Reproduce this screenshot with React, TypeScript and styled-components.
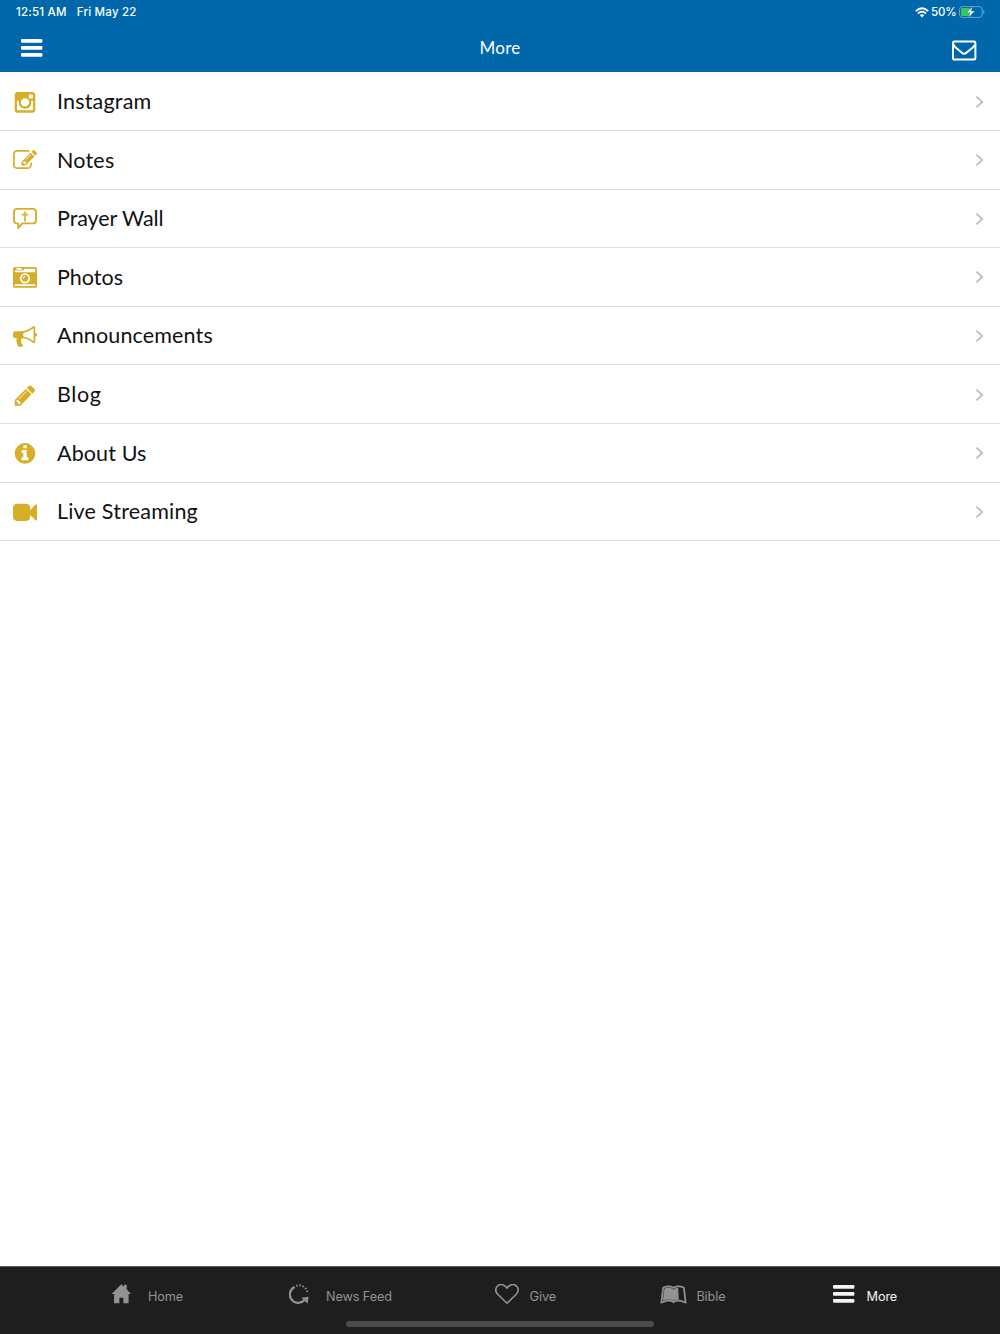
import React from "react";
import styled, { createGlobalStyle } from "styled-components";
import { FaLeanpub } from "react-icons/fa";

const GlobalStyle = createGlobalStyle`
  * { box-sizing: border-box; }
  body { margin: 0; background: #fff; }
`;

const Screen = styled.div`
  display: flex;
  flex-direction: column;
  height: 1334px;
  overflow: hidden;
  background: #fff;
  font-family: Lato, "Open Sans", sans-serif;
`;

const Header = styled.header`
  height: 72.4px;
  background: #0067ab;
  color: #fff;
  flex: none;
`;

const StatusBar = styled.div`
  height: 24px;
  display: flex;
  align-items: center;
  justify-content: space-between;
  padding: 0 15px 0 16px;
  font: 500 11.5px/24px Inter, sans-serif;
`;

const StatusGroup = styled.div<{ $gap: number; $spacing: number }>`
  display: flex;
  align-items: center;
  gap: ${(p) => p.$gap}px;
  letter-spacing: ${(p) => p.$spacing}px;
`;

const NavBar = styled.div`
  height: 47px;
  display: grid;
  grid-template-columns: 60px 1fr 60px;
  align-items: center;
  padding: 0 23px 0 21px;
`;

const NavTitle = styled.h1`
  margin: 0;
  padding: 1px 0 0 2px;
  text-align: center;
  font-size: 17px;
  line-height: 24px;
  font-weight: 400;
  letter-spacing: 0.2px;
`;

const NavButton = styled.button<{ $end?: boolean }>`
  display: flex;
  justify-content: ${(p) => (p.$end ? "flex-end" : "flex-start")};
  padding: ${(p) => (p.$end ? "6px 0 0" : "0")};
  border: 0;
  background: none;
  color: inherit;
`;

const List = styled.ul`
  list-style: none;
  margin: 0;
  padding: 0;
  flex: 1;
`;

const Row = styled.li`
  height: 58.6px;
  display: flex;
  align-items: center;
  padding: 1px 16px 0 13px;
  border-bottom: 1px solid #dedede;
`;

const RowIcon = styled.span`
  width: 44px;
  display: flex;
  color: #d6ae27;
`;

const RowLabel = styled.span<{ $spacing: number }>`
  flex: 1;
  padding-bottom: 1.4px;
  font-size: 21.5px;
  line-height: 30px;
  color: #111;
  letter-spacing: ${(p) => p.$spacing}px;
`;

const TabBar = styled.footer`
  height: 68px;
  flex: none;
  display: flex;
  flex-direction: column;
  align-items: center;
  background: #1e1e1e;
  border-top: 1px solid #5d605f;
`;

const Tabs = styled.nav`
  display: grid;
  grid-template-columns: 178px 206px 165px 173px 1fr;
  width: 100%;
  height: 54px;
  padding-left: 111px;
`;

const Tab = styled.div<{ $active?: boolean }>`
  display: flex;
  align-items: center;
  color: ${(p) => (p.$active ? "#f4f4f4" : "#929292")};
`;

const TabIcon = styled.span<{ $width: number }>`
  width: ${(p) => p.$width}px;
  display: flex;
`;

const TabLabel = styled.span`
  font: 400 12.7px/20px Inter, sans-serif;
  padding-top: 5px;
  letter-spacing: -0.12px;
`;

const HomeIndicator = styled.div`
  width: 308px;
  height: 5.5px;
  border-radius: 3px;
  background: #4b4b4b;
`;

const glyphs = {
  instagram:
    "M1490 1426v-648h-135q20 63 20 131 0 126-64 232.5t-174 168.5-240 62q-197 0-337-135.5t-140-327.5q0-68 20-131h-141v648q0 26 17.5 43.5t43.5 17.5h1069q25 0 43-17.5t18-43.5zm-284-533q0-124-90.5-211.5t-218.5-87.5q-127 0-217.5 87.5t-90.5 211.5 90.5 211.5 217.5 87.5q128 0 218.5-87.5t90.5-211.5zm284-360v-165q0-28-20-48.5t-49-20.5h-174q-29 0-49 20.5t-20 48.5v165q0 29 20 49t49 20h174q29 0 49-20t20-49zm174-208v1142q0 81-58 139t-139 58h-1142q-81 0-139-58t-58-139v-1142q0-81 58-139t139-58h1142q81 0 139 58t58 139z",
  notes:
    "M888 1184l116-116-152-152-116 116v56h96v96h56zm440-720q-16-16-33 1l-350 350q-17 17-1 33t33-1l350-350q17-17 1-33zm80 594v190q0 119-84.5 203.5t-203.5 84.5h-832q-119 0-203.5-84.5t-84.5-203.5v-832q0-119 84.5-203.5t203.5-84.5h832q63 0 117 25 15 7 18 23 3 17-9 29l-49 49q-14 14-32 8-23-6-45-6h-832q-66 0-113 47t-47 113v832q0 66 47 113t113 47h832q66 0 113-47t47-113v-126q0-13 9-22l64-64q15-15 35-7t20 29zm-96-738l288 288-672 672h-288v-288zm444 132l-92 92-288-288 92-92q28-28 68-28t68 28l152 152q28 28 28 68t-28 68z",
  photos:
    "M928 832q0-14-9-23t-23-9q-66 0-113 47t-47 113q0 14 9 23t23 9 23-9 9-23q0-40 28-68t68-28q14 0 23-9t9-23zm224 130q0 106-75 181t-181 75-181-75-75-181 75-181 181-75 181 75 75 181zm-1024 574h1536v-128h-1536v128zm1152-574q0-159-112.5-271.5t-271.5-112.5-271.5 112.5-112.5 271.5 112.5 271.5 271.5 112.5 271.5-112.5 112.5-271.5zm-1024-642h384v-128h-384v128zm-128 192h1536v-256h-828l-64 128h-644v128zm1664-256v1280q0 53-37.5 90.5t-90.5 37.5h-1536q-53 0-90.5-37.5t-37.5-90.5v-1280q0-53 37.5-90.5t90.5-37.5h1536q53 0 90.5 37.5t37.5 90.5z",
  announcements:
    "M1664 640q53 0 90.5 37.5t37.5 90.5-37.5 90.5-90.5 37.5v384q0 52-38 90t-90 38q-417-347-812-380-58 19-91 66t-31 100.5 40 92.5q-20 33-23 65.5t6 58 33.5 55 48 50 61.5 50.5q-29 58-111.5 83t-168.5 11.5-132-55.5q-7-23-29.5-87.5t-32-94.5-23-89-15-101 3.5-98.5 22-110.5h-122q-66 0-113-47t-47-113v-192q0-66 47-113t113-47h480q435 0 896-384 52 0 90 38t38 90v384zm-128 604v-954q-394 302-768 343v270q377 42 768 341z",
  blog:
    "M491 1536l91-91-235-235-91 91v107h128v128h107zm523-928q0-22-22-22-10 0-17 7l-542 542q-7 7-7 17 0 22 22 22 10 0 17-7l542-542q7-7 7-17zm-54-192l416 416-832 832h-416v-416zm683 96q0 53-37 90l-166 166-416-416 166-165q36-38 90-38 53 0 91 38l235 234q37 39 37 91z",
  about:
    "M1152 1376v-160q0-14-9-23t-23-9h-96v-512q0-14-9-23t-23-9h-320q-14 0-23 9t-9 23v160q0 14 9 23t23 9h96v320h-96q-14 0-23 9t-9 23v160q0 14 9 23t23 9h448q14 0 23-9t9-23zm-128-896v-160q0-14-9-23t-23-9h-192q-14 0-23 9t-9 23v160q0 14 9 23t23 9h192q14 0 23-9t9-23zm640 416q0 209-103 385.5t-279.5 279.5-385.5 103-385.5-103-279.5-279.5-103-385.5 103-385.5 279.5-279.5 385.5-103 385.5 103 279.5 279.5 103 385.5z",
  live:
    "M1792 352v1088q0 42-39 59-13 5-25 5-27 0-45-19l-403-403v166q0 119-84.5 203.5t-203.5 84.5h-704q-119 0-203.5-84.5t-84.5-203.5v-704q0-119 84.5-203.5t203.5-84.5h704q119 0 203.5 84.5t84.5 203.5v165l403-402q18-19 45-19 12 0 25 5 39 17 39 59z",
};

const Glyph = ({ d }: { d: string }) => (
  <svg width="24" height="24" viewBox="0 -30 1792 1792" fill="currentColor">
    <path d={d} />
  </svg>
);

const PrayerIcon = () => (
  <svg width="24" height="24" viewBox="0 0 24 24" fill="none" stroke="currentColor">
    <path
      d="M4 1.9H20Q23 1.9 23 4.9V13.4Q23 16.4 20 16.4H9.3L5.2 21.2V16.4H4Q1 16.4 1 13.4V4.9Q1 1.9 4 1.9Z"
      strokeWidth="1.9"
      strokeLinejoin="round"
    />
    <path d="M12 4.4V14.4M8.9 7.6H15.1" strokeWidth="1.6" />
  </svg>
);

const BarsIcon = () => (
  <svg width="22" height="20" viewBox="0 0 22 20" fill="currentColor">
    <rect x="0" y=".9" width="21.4" height="3.8" rx="1" />
    <rect x="0" y="7.9" width="21.4" height="3.8" rx="1" />
    <rect x="0" y="14.9" width="21.4" height="3.8" rx="1" />
  </svg>
);

const MailIcon = () => (
  <svg width="25" height="21" viewBox="0 0 25 21" fill="none" stroke="currentColor" strokeWidth="2">
    <rect x="1" y="1.6" width="22.4" height="18" rx="1.4" />
    <path d="M1.3 4.6Q2.4 6.6 4.2 8L10.2 12.9Q12.2 14.5 14.2 12.9L20.2 8Q22 6.6 23.1 4.6" />
  </svg>
);

const WifiIcon = () => (
  <svg width="14" height="11" viewBox="0 0 14 11" fill="none" stroke="currentColor" strokeWidth="1.8">
    <path d="M.8 4.1Q7-1.7 13.2 4.1M3 6.5Q7 2.8 11 6.5" />
    <path d="M7 10.4L4.8 8.1Q7 6.3 9.2 8.1Z" fill="currentColor" stroke="none" />
  </svg>
);

const BatteryIcon = () => (
  <svg width="26" height="12" viewBox="0 0 26 12">
    <rect x=".5" y=".6" width="22.6" height="10.8" rx="3" fill="none" stroke="#75add1" strokeWidth=".9" />
    <path d="M24.3 4v4q1.2-.5 1.2-2t-1.2-2Z" fill="#75add1" />
    <path d="M3.5 2H11.5V10H3.5Q2 10 2 8.5V3.5Q2 2 3.5 2Z" fill="#35c759" />
    <path d="M13.6 .8L7.6 6.7H11L9.5 11.4L15.8 5.1H12.3Z" fill="#fff" stroke="#0067ab" strokeWidth=".4" />
  </svg>
);

const ChevronIcon = () => (
  <svg width="9" height="14" viewBox="0 0 9 14" fill="none" stroke="#bdbdbd" strokeWidth="1.8">
    <path d="M1.4 1.6L7.2 7L1.4 12.4" />
  </svg>
);

const HomeIcon = () => (
  <svg width="21" height="20" viewBox="0 0 21 20" fill="currentColor">
    <path d="M10.3 .2L13 2.8V.8H15.7V5.3L20 10H17.6V19.3H12.3V13.8H8.4V19.3H3.1V10H.6Z" />
  </svg>
);

const FeedIcon = () => (
  <svg width="21" height="21" viewBox="0 0 21 21" fill="none" stroke="currentColor">
    <path d="M5.6 2.9A8.4 8.4 0 1 0 15.2 16.4" strokeWidth="2.2" />
    <path d="M7.2 1.8A8.6 8.6 0 0 1 18.5 8.6" strokeWidth="2" strokeDasharray="1.5 1.7" />
    <path d="M12.3 13.8L19.6 12.8L18.6 19.6Z" fill="currentColor" stroke="none" />
  </svg>
);

const HeartIcon = () => (
  <svg width="25" height="21" viewBox="0 0 25 21" fill="none" stroke="currentColor" strokeWidth="1.6">
    <path
      d="M12 19.3L2.7 10.3C-2 5.1 3.2-1.1 8.3 .9C10 1.6 11 2.8 12 4.2C13 2.8 14 1.6 15.7 .9C20.8-1.1 26 5.1 21.3 10.3Z"
      strokeLinejoin="round"
    />
  </svg>
);

const rows = [
  { label: "Instagram", icon: <Glyph d={glyphs.instagram} />, spacing: 0.18 },
  { label: "Notes", icon: <Glyph d={glyphs.notes} />, spacing: 0.2 },
  { label: "Prayer Wall", icon: <PrayerIcon />, spacing: -0.08 },
  { label: "Photos", icon: <Glyph d={glyphs.photos} />, spacing: 0 },
  { label: "Announcements", icon: <Glyph d={glyphs.announcements} />, spacing: 0.14 },
  { label: "Blog", icon: <Glyph d={glyphs.blog} />, spacing: 0.6 },
  { label: "About Us", icon: <Glyph d={glyphs.about} />, spacing: 0.12 },
  { label: "Live Streaming", icon: <Glyph d={glyphs.live} />, spacing: 0.2 },
];

const tabs = [
  { label: "Home", icon: <HomeIcon />, width: 37 },
  { label: "News Feed", icon: <FeedIcon />, width: 37 },
  { label: "Give", icon: <HeartIcon />, width: 34.6 },
  { label: "Bible", icon: <FaLeanpub size={27} />, width: 36.4 },
  { label: "More", icon: <BarsIcon />, width: 33.6, active: true },
];

export default function App() {
  return (
    <>
      <GlobalStyle />
      <Screen>
        <Header>
          <StatusBar>
            <StatusGroup $gap={10} $spacing={0.22}>
              <span>12:51 AM</span>
              <span>Fri May 22</span>
            </StatusGroup>
            <StatusGroup $gap={2.4} $spacing={-0.1}>
              <WifiIcon />
              <span>50%</span>
              <BatteryIcon />
            </StatusGroup>
          </StatusBar>
          <NavBar>
            <NavButton aria-label="Menu">
              <BarsIcon />
            </NavButton>
            <NavTitle>More</NavTitle>
            <NavButton $end aria-label="Messages">
              <MailIcon />
            </NavButton>
          </NavBar>
        </Header>
        <List>
          {rows.map((row) => (
            <Row key={row.label}>
              <RowIcon>{row.icon}</RowIcon>
              <RowLabel $spacing={row.spacing}>{row.label}</RowLabel>
              <ChevronIcon />
            </Row>
          ))}
        </List>
        <TabBar>
          <Tabs>
            {tabs.map((tab) => (
              <Tab key={tab.label} $active={tab.active}>
                <TabIcon $width={tab.width}>{tab.icon}</TabIcon>
                <TabLabel>{tab.label}</TabLabel>
              </Tab>
            ))}
          </Tabs>
          <HomeIndicator />
        </TabBar>
      </Screen>
    </>
  );
}
